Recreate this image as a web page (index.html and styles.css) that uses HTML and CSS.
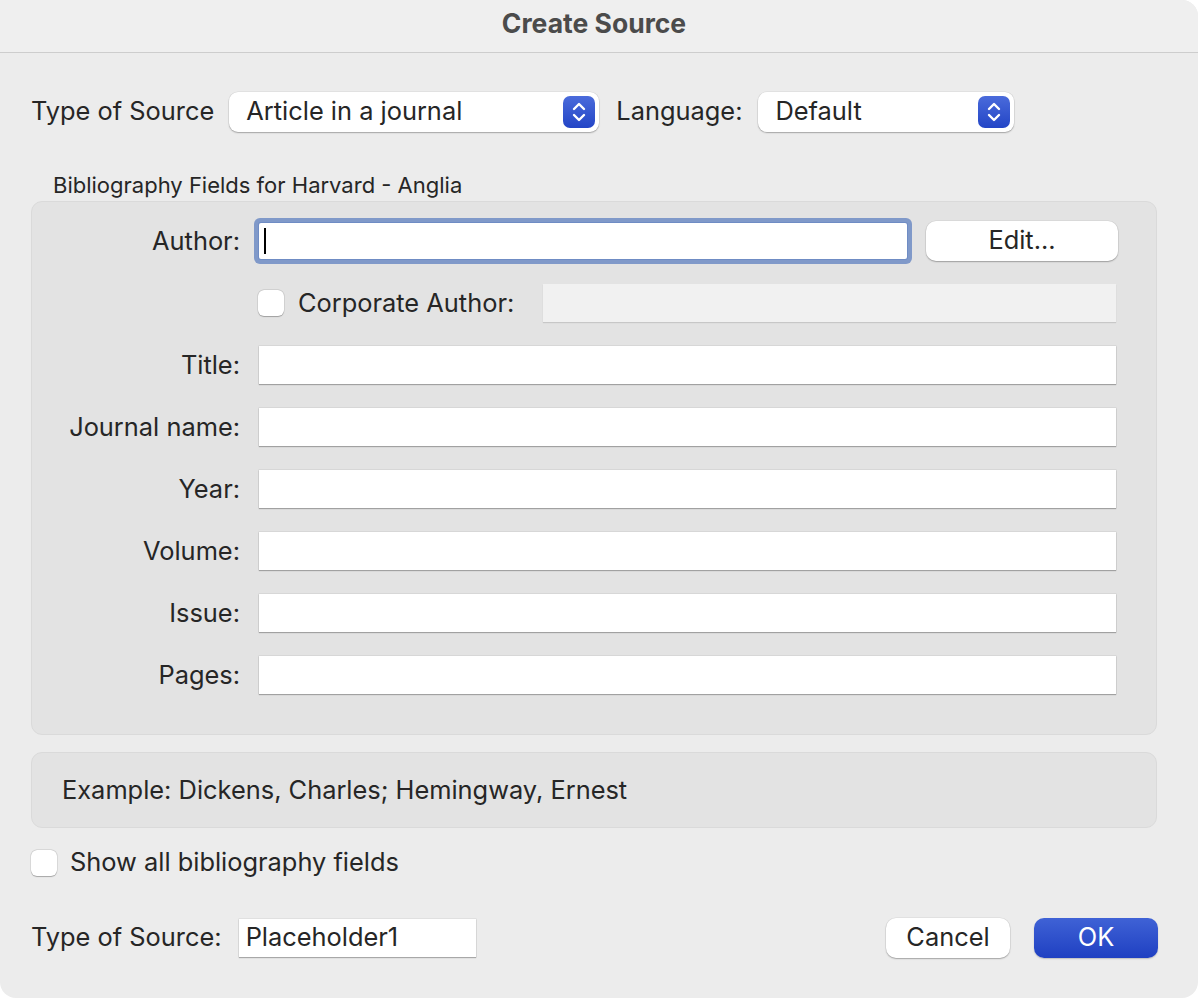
FILE: index.html
```html
<!DOCTYPE html>
<html lang="en">
<head>
  <meta charset="utf-8">
  <title>Create Source</title>
  <link rel="stylesheet" href="styles.css">
</head>
<body>

<div class="window">
  <div class="titlebar">Create Source</div>

  <div class="content">
    <div class="top-row">
      <span class="label">Type of Source</span>
      <div class="popup popup-type">
        <span>Article in a journal</span>
        <span class="stepper">
          <svg width="16" height="22" viewBox="0 0 16 22"><path d="M3 8 L8 3 L13 8 M3 14 L8 19 L13 14" fill="none" stroke="#fff" stroke-width="2.4" stroke-linecap="round" stroke-linejoin="round"/></svg>
        </span>
      </div>
      <span class="label">Language:</span>
      <div class="popup popup-lang">
        <span>Default</span>
        <span class="stepper">
          <svg width="16" height="22" viewBox="0 0 16 22"><path d="M3 8 L8 3 L13 8 M3 14 L8 19 L13 14" fill="none" stroke="#fff" stroke-width="2.4" stroke-linecap="round" stroke-linejoin="round"/></svg>
        </span>
      </div>
    </div>

    <div class="group-title">Bibliography Fields for Harvard - Anglia</div>

    <div class="group-box">
      <div class="form-grid">
        <span class="field-label">Author:</span>
        <div class="author-row">
          <div class="field focused"><span class="caret"></span></div>
          <button class="btn edit-btn">Edit...</button>
        </div>

        <span></span>
        <div class="corp-row">
          <span class="checkbox"></span>
          <span class="corp-label">Corporate Author:</span>
          <div class="field disabled"></div>
        </div>

        <span class="field-label">Title:</span>
        <div class="field"></div>

        <span class="field-label">Journal name:</span>
        <div class="field"></div>

        <span class="field-label">Year:</span>
        <div class="field"></div>

        <span class="field-label">Volume:</span>
        <div class="field"></div>

        <span class="field-label">Issue:</span>
        <div class="field"></div>

        <span class="field-label">Pages:</span>
        <div class="field"></div>
      </div>
    </div>

    <div class="example-box">Example: Dickens, Charles; Hemingway, Ernest</div>

    <div class="check-row">
      <span class="checkbox"></span>
      <span>Show all bibliography fields</span>
    </div>

    <div class="bottom-row">
      <span class="label">Type of Source:</span>
      <div class="field tag-field">Placeholder1</div>
      <div class="spacer"></div>
      <button class="btn cancel-btn">Cancel</button>
      <button class="btn ok-btn">OK</button>
    </div>
  </div>
</div>

</body>
</html>
```

FILE: styles.css
```css
body {
  margin: 0;
  background: #ffffff;
  font-family: "Inter", "Liberation Sans", sans-serif;
  color: #262626;
}

.window {
  width: 1198px;
  height: 998px;
  background: #ececec;
  border-radius: 0 16px 16px 16px;
  overflow: hidden;
  font-size: 25.4px;
}

.titlebar {
  height: 52px;
  line-height: 46px;
  background: #efefef;
  border-bottom: 1px solid #cdcdcd;
  text-align: center;
  font-weight: bold;
  font-size: 26.5px;
  color: #4b4b4b;
  padding-right: 10px;
}

.content {
  padding: 39px 40px 0 31px;
}

/* top row */
.top-row {
  display: flex;
  align-items: center;
  height: 40px;
}

.label {
  white-space: nowrap;
  padding-bottom: 3px;
}

.popup {
  display: flex;
  align-items: center;
  justify-content: space-between;
  height: 40px;
  box-sizing: border-box;
  padding: 0 4px 0 17px;
  margin: 0 17px 0 15px;
  background: #ffffff;
  border-radius: 9px;
  box-shadow: 0 1px 1.5px rgba(0, 0, 0, 0.28), 0 0 0 0.5px rgba(0, 0, 0, 0.08);
}

.popup > span:first-child {
  padding-bottom: 3px;
}

.popup-type {
  width: 370px;
}

.popup-lang {
  width: 256px;
  margin-left: 16px;
}

.stepper {
  width: 32px;
  height: 32px;
  border-radius: 7px;
  background: linear-gradient(to bottom, #4a6bdb, #2345c6);
  display: flex;
  align-items: center;
  justify-content: center;
}

/* group */
.group-title {
  font-size: 22px;
  margin: 41px 0 4px 22px;
  line-height: 24px;
}

.group-box {
  width: 1126px;
  box-sizing: border-box;
  background: #e3e3e3;
  border: 1px solid #dadada;
  border-radius: 11px;
  padding: 20px 40px 40px 0;
}

.form-grid {
  display: grid;
  grid-template-columns: 208px 857px;
  column-gap: 19px;
  grid-auto-rows: 38px;
  row-gap: 24px;
  align-items: center;
}

.field-label {
  text-align: right;
  padding-bottom: 2px;
}

.field {
  height: 38px;
  box-sizing: border-box;
  background: #ffffff;
  box-shadow: 0 1px 1px rgba(0, 0, 0, 0.25), 0 0 0 0.5px rgba(0, 0, 0, 0.1);
}

.author-row {
  display: flex;
  align-items: center;
}

.field.focused {
  width: 648px;
  height: 36px;
  border-radius: 2px;
  box-shadow: 0 0 0 1px #6f8cc4, 0 0 0 5px #8099c9;
  display: flex;
  align-items: center;
  padding-left: 5px;
  flex: none;
}

.caret {
  width: 2px;
  height: 26px;
  background: #000000;
}

.btn {
  font-family: inherit;
  font-size: 25.4px;
  color: #262626;
  height: 40px;
  border: none;
  border-radius: 10px;
  background: #ffffff;
  box-shadow: 0 1px 1.5px rgba(0, 0, 0, 0.28), 0 0 0 0.5px rgba(0, 0, 0, 0.08);
  padding: 0 0 3px;
}

.edit-btn {
  width: 192px;
  margin-left: 19px;
  flex: none;
}

.corp-row {
  display: flex;
  align-items: center;
  margin-left: -1px;
}

.checkbox {
  width: 26px;
  height: 26px;
  box-sizing: border-box;
  background: #ffffff;
  border-radius: 6px;
  box-shadow: 0 0.5px 1px rgba(0, 0, 0, 0.25), 0 0 0 0.5px rgba(0, 0, 0, 0.12);
  flex: none;
}

.corp-label {
  margin-left: 14px;
  white-space: nowrap;
  padding-bottom: 2px;
}

.field.disabled {
  width: 573px;
  margin-left: auto;
  background: #f1f1f1;
  box-shadow: 0 1px 1px rgba(0, 0, 0, 0.12);
}

/* example */
.example-box {
  width: 1126px;
  height: 76px;
  box-sizing: border-box;
  margin-top: 17px;
  background: #e3e3e3;
  border: 1px solid #dadada;
  border-radius: 11px;
  display: flex;
  align-items: center;
  padding: 0 0 2px 30px;
}

.check-row {
  display: flex;
  align-items: center;
  margin-top: 18px;
  gap: 13px;
}

.check-row span:last-child {
  padding-bottom: 2px;
}

/* bottom */
.bottom-row {
  display: flex;
  align-items: center;
  margin-top: 39px;
  height: 40px;
}

.tag-field {
  width: 237px;
  margin-left: 17px;
  padding-left: 7px;
  line-height: 36px;
}

.spacer {
  flex: 1;
}

.cancel-btn {
  width: 124px;
}

.ok-btn {
  width: 124px;
  margin-left: 24px;
  color: #ffffff;
  background: linear-gradient(to bottom, #3f62d6, #1f40c2);
  box-shadow: 0 1px 1.5px rgba(0, 0, 0, 0.2);
}
```
